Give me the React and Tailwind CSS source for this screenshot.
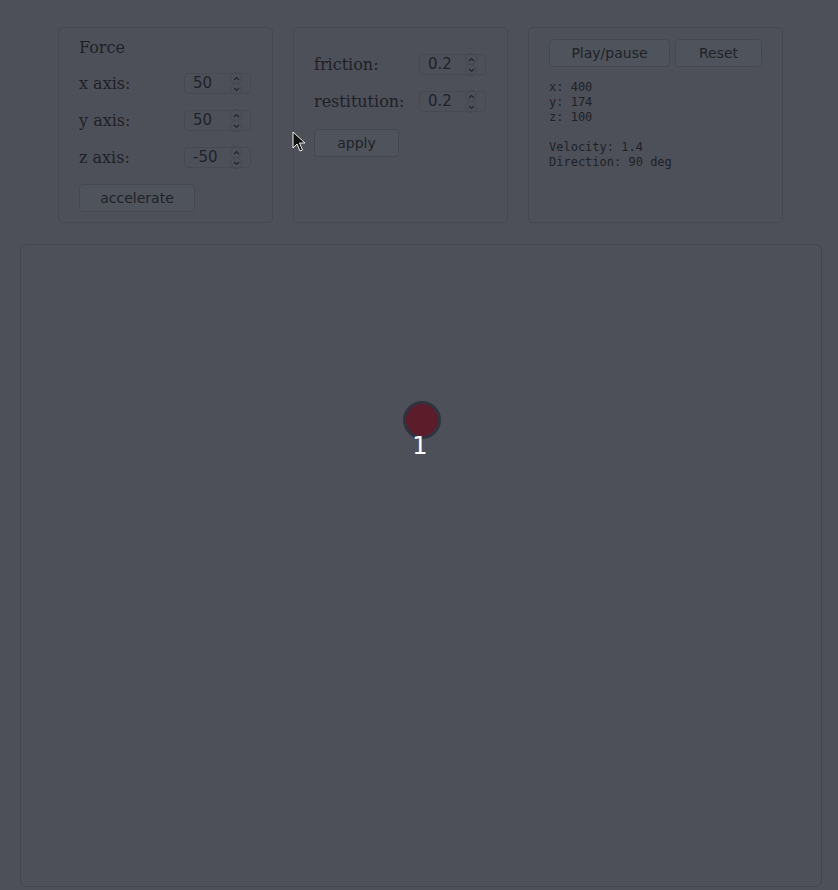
import React from "react";

const serif = { fontFamily: '"DejaVu Serif", serif' };
const sans = { fontFamily: '"DejaVu Sans", sans-serif' };
const mono = { fontFamily: '"DejaVu Sans Mono", monospace' };

function Spin() {
  return (
    <div className="flex flex-col items-center justify-center -space-y-[1px]">
      <div className="w-[12px] h-[12px] rounded-full border border-[#45484f] flex items-center justify-center">
        <svg width="7" height="5" viewBox="0 0 7 5"><path d="M1 4 L3.5 1.5 L6 4" stroke="#24262b" strokeWidth="1.2" fill="none" /></svg>
      </div>
      <div className="w-[12px] h-[12px] rounded-full border border-[#45484f] flex items-center justify-center">
        <svg width="7" height="5" viewBox="0 0 7 5"><path d="M1 1 L3.5 3.5 L6 1" stroke="#24262b" strokeWidth="1.2" fill="none" /></svg>
      </div>
    </div>
  );
}

function NumInput({ value }) {
  return (
    <div className="w-[67px] h-[21px] rounded-[4px] border border-[#464950] flex items-center pl-[8px] pr-[8px] justify-between">
      <span className="text-[15px] text-[#202227]" style={sans}>{value}</span>
      <Spin />
    </div>
  );
}

function Row({ label, value }) {
  return (
    <div className="flex items-center h-[37px]">
      <div className="w-[105px] text-[16px] text-[#1f2026]" style={serif}>{label}</div>
      <NumInput value={value} />
    </div>
  );
}

function Btn({ children, w }) {
  return (
    <div
      className={`h-[28px] rounded-[4px] border border-[#45484f] bg-[#4f535b] flex items-center justify-center text-[14px] text-[#202227] ${w}`}
      style={sans}
    >
      {children}
    </div>
  );
}

export default function App() {
  return (
    <div className="w-[838px] h-[890px] bg-[#4d5059] relative overflow-hidden">
      <div className="pt-[27px] flex flex-col">
        <div className="flex gap-[20px] pl-[58px]">
          <div className="w-[215px] h-[196px] rounded-[5px] border border-[#45484f] px-[20px] pt-[9px]">
            <div className="text-[16px] text-[#1f2026] h-[22px] leading-[22px]" style={serif}>Force</div>
            <div className="mt-[6px] flex flex-col">
              <Row label="x axis:" value="50" />
              <Row label="y axis:" value="50" />
              <Row label="z axis:" value="-50" />
            </div>
            <div className="mt-[8px]">
              <Btn w="w-[116px]">accelerate</Btn>
            </div>
          </div>
          <div className="w-[215px] h-[196px] rounded-[5px] border border-[#45484f] px-[20px] pt-[18px]">
            <Row label="friction:" value="0.2" />
            <Row label="restitution:" value="0.2" />
            <div className="mt-[9px]">
              <Btn w="w-[85px]">apply</Btn>
            </div>
          </div>
          <div className="w-[255px] h-[196px] rounded-[5px] border border-[#45484f] px-[20px] pt-[11px]">
            <div className="flex gap-[5px]">
              <Btn w="w-[121px]">Play/pause</Btn>
              <Btn w="w-[87px]">Reset</Btn>
            </div>
            <div className="mt-[13px] text-[12px] leading-[15px] text-[#202227] whitespace-pre" style={mono}>
              {"x: 400\ny: 174\nz: 100\n\nVelocity: 1.4\nDirection: 90 deg"}
            </div>
          </div>
        </div>
        <div className="mt-[21px] ml-[20px] w-[802px] h-[643px] rounded-[6px] border border-[#43464d] relative">
          <div className="absolute left-[382px] top-[156px] w-[38px] h-[38px] rounded-full bg-[#5c1c2a] border-[3px] border-[#30333f]" />
          <div className="absolute left-[389px] top-[186px] w-[20px] text-center text-[24px] leading-[30px] text-white" style={sans}>1</div>
        </div>
      </div>
      <svg className="absolute left-[292px] top-[131px]" width="14" height="22" viewBox="0 0 14 22">
        <path d="M1 1 L1 17 L5 13 L8 20 L10.5 19 L7.5 12 L13 12 Z" fill="#111" stroke="#eee" strokeWidth="1" strokeLinejoin="round" />
      </svg>
    </div>
  );
}
